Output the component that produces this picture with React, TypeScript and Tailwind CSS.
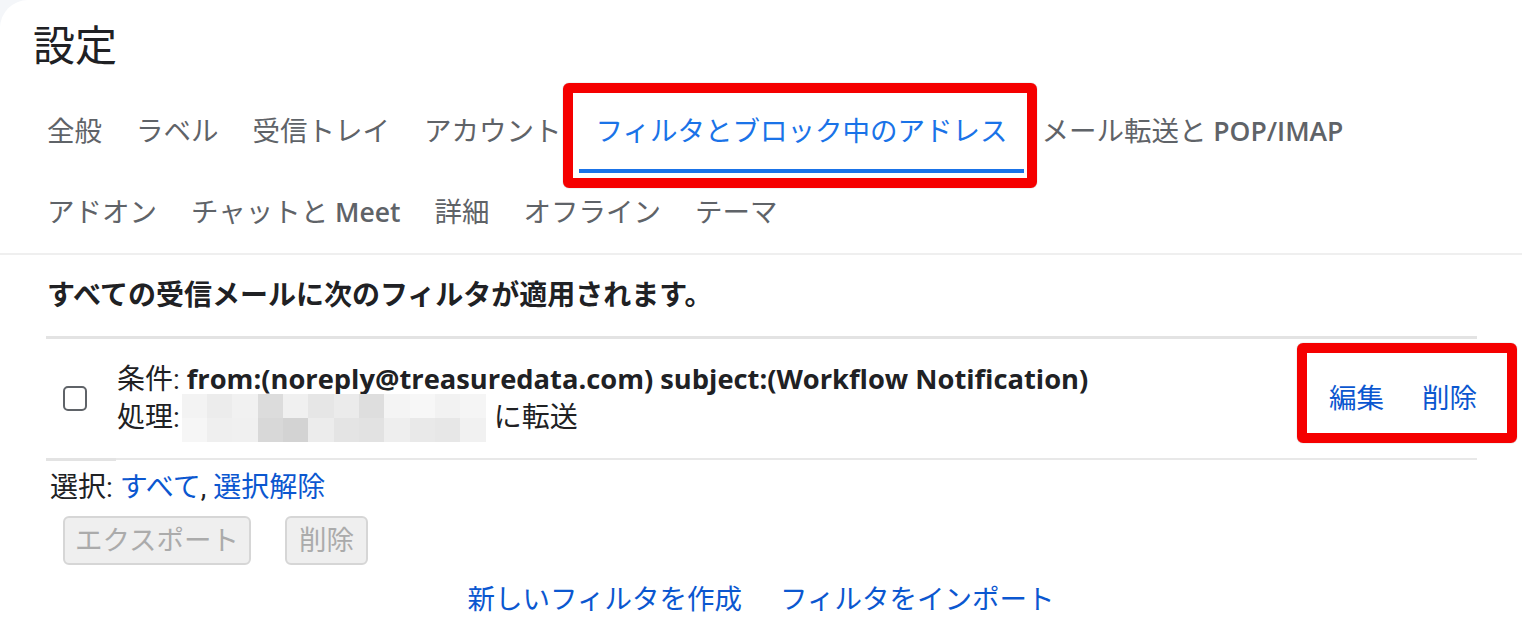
import React from "react";

const FONT = { fontFamily: '"Roboto", "Noto Sans CJK JP", "Noto Sans", sans-serif' };
const LATIN = { fontFamily: '"Open Sans", "Noto Sans CJK JP", sans-serif' };

type TabDef = { jp: string; en?: string };
const row1: TabDef[] = [
  { jp: "全般" },
  { jp: "ラベル" },
  { jp: "受信トレイ" },
  { jp: "アカウント" },
  { jp: "フィルタとブロック中のアドレス" },
  { jp: "メール転送と ", en: "POP/IMAP" },
];
const row2: TabDef[] = [
  { jp: "アドオン" },
  { jp: "チャットと ", en: "Meet" },
  { jp: "詳細" },
  { jp: "オフライン" },
  { jp: "テーマ" },
];
const ACTIVE = "フィルタとブロック中のアドレス";

const mosaicTop = ["#f3f3f3", "#ececec", "#f1f1f1", "#dcdcdc", "#f0f0f0", "#e6e6e6", "#ebebeb", "#dedede", "#f4f4f4", "#f7f7f7", "#f2f2f2", "#f5f5f5"];
const mosaicBot = ["#f6f6f6", "#efefef", "#f0f0f0", "#d8d8d8", "#d3d3d3", "#ececec", "#e4e4e4", "#e2e2e2", "#eeeeee", "#e9e9e9", "#e7e7e7", "#f1f1f1"];

function Tab({ t }: { t: TabDef }) {
  const active = t.jp === ACTIVE;
  return (
    <div
      className={
        "h-full flex items-center px-[17px] border-t-4 border-b-4 border-t-transparent " +
        (active ? "border-b-[#1a73e8] text-[#1a73e8]" : "border-b-transparent text-[#5f6368]")
      }
    >
      <span className="text-[27.5px] leading-none whitespace-pre">
        {t.jp}
        {t.en && (
          <span className="font-semibold text-[26.5px]" style={LATIN}>
            {t.en}
          </span>
        )}
      </span>
    </div>
  );
}

export default function App() {
  return (
    <div className="w-[1522px] h-[624px] bg-[#f4f6f9] overflow-hidden" style={FONT}>
      <div className="relative w-full h-full bg-white rounded-tl-[28px]">
        {/* Title */}
        <div className="h-[91px] pt-[20px] pl-[33px]">
          <h1 className="text-[42px] leading-[54px] text-[#202124] font-normal">設定</h1>
        </div>

        {/* Tabs */}
        <div className="pl-[30px] h-[82px] flex">
          {row1.map((t) => (
            <Tab key={t.jp} t={t} />
          ))}
        </div>
        <div className="pl-[30px] h-[80px] flex">
          {row2.map((t) => (
            <Tab key={t.jp} t={t} />
          ))}
        </div>
        <div className="h-[2px] bg-[#efefef]" />

        {/* Content */}
        <div className="pl-[46px] pr-[45px]">
          <div className="pt-[23px] pb-[22px] pl-[1px]">
            <p className="text-[28px] leading-[36px] font-bold text-[#202124]">
              すべての受信メールに次のフィルタが適用されます。
            </p>
          </div>
          <div className="h-[3px] bg-[#e3e3e3]" />

          {/* Filter row */}
          <div className="h-[119px] flex items-center">
            <div className="pl-[17px] pr-[30px]">
              <div className="w-[24px] h-[25px] border-2 border-[#5f6368] rounded-[5px]" />
            </div>
            <div className="flex-1 text-[28px] text-[#202124]">
              <div className="h-[38px] flex items-center whitespace-nowrap">
                <span>条件:&nbsp;</span>
                <span className="font-bold text-[27.3px]" style={LATIN}>
                  from:(noreply@treasuredata.com) subject:(Workflow Notification)
                </span>
              </div>
              <div className="h-[38px] flex items-center whitespace-nowrap">
                <span>処理:</span>
                <div className="ml-[2px] w-[304px] h-[48px] flex flex-col">
                  <div className="flex h-[24px]">
                    {mosaicTop.map((c, i) => (
                      <div key={i} className="flex-1" style={{ backgroundColor: c }} />
                    ))}
                  </div>
                  <div className="flex h-[24px]">
                    {mosaicBot.map((c, i) => (
                      <div key={i} className="flex-1" style={{ backgroundColor: c }} />
                    ))}
                  </div>
                </div>
                <span className="ml-[8px]">に転送</span>
              </div>
            </div>
            <div className="flex gap-[38px] text-[27.5px] text-[#0b57d0] whitespace-nowrap">
              <span>編集</span>
              <span>削除</span>
            </div>
          </div>

          <div className="flex items-start">
            <div className="w-[70px] h-[3px] bg-[#e3e3e3]" />
            <div className="flex-1 h-[2px] bg-[#e8e8e8]" />
          </div>

          {/* Selection */}
          <div className="mt-[9px] pl-[4px] text-[28px] leading-[36px] text-[#202124] whitespace-nowrap">
            選択: <span className="text-[#0b57d0]">すべて</span>, <span className="text-[#0b57d0]">選択解除</span>
          </div>

          <div className="mt-[10px] pl-[17px] flex gap-[34px]">
            <button className="w-[188px] h-[49px] bg-[#efefef] border-2 border-[#d6d6d6] rounded-[6px] text-[27.5px] text-[#ababab]">
              エクスポート
            </button>
            <button className="w-[83px] h-[49px] bg-[#efefef] border-2 border-[#d6d6d6] rounded-[6px] text-[27.5px] text-[#ababab]">
              削除
            </button>
          </div>
        </div>

        <div className="mt-[17px] flex justify-center gap-[38px] text-[27.5px] leading-[36px] text-[#0b57d0] whitespace-nowrap">
          <span>新しいフィルタを作成</span>
          <span>フィルタをインポート</span>
        </div>

        {/* Red annotation boxes */}
        <div className="absolute left-[563px] top-[83px] w-[474px] h-[105px] border-[10px] border-[#f50000] rounded-[6px] shadow-[0_0_1px_#888]" />
        <div className="absolute left-[1297px] top-[343px] w-[220px] h-[100px] border-[10px] border-[#f50000] rounded-[6px] shadow-[0_0_1px_#888]" />
      </div>
    </div>
  );
}
